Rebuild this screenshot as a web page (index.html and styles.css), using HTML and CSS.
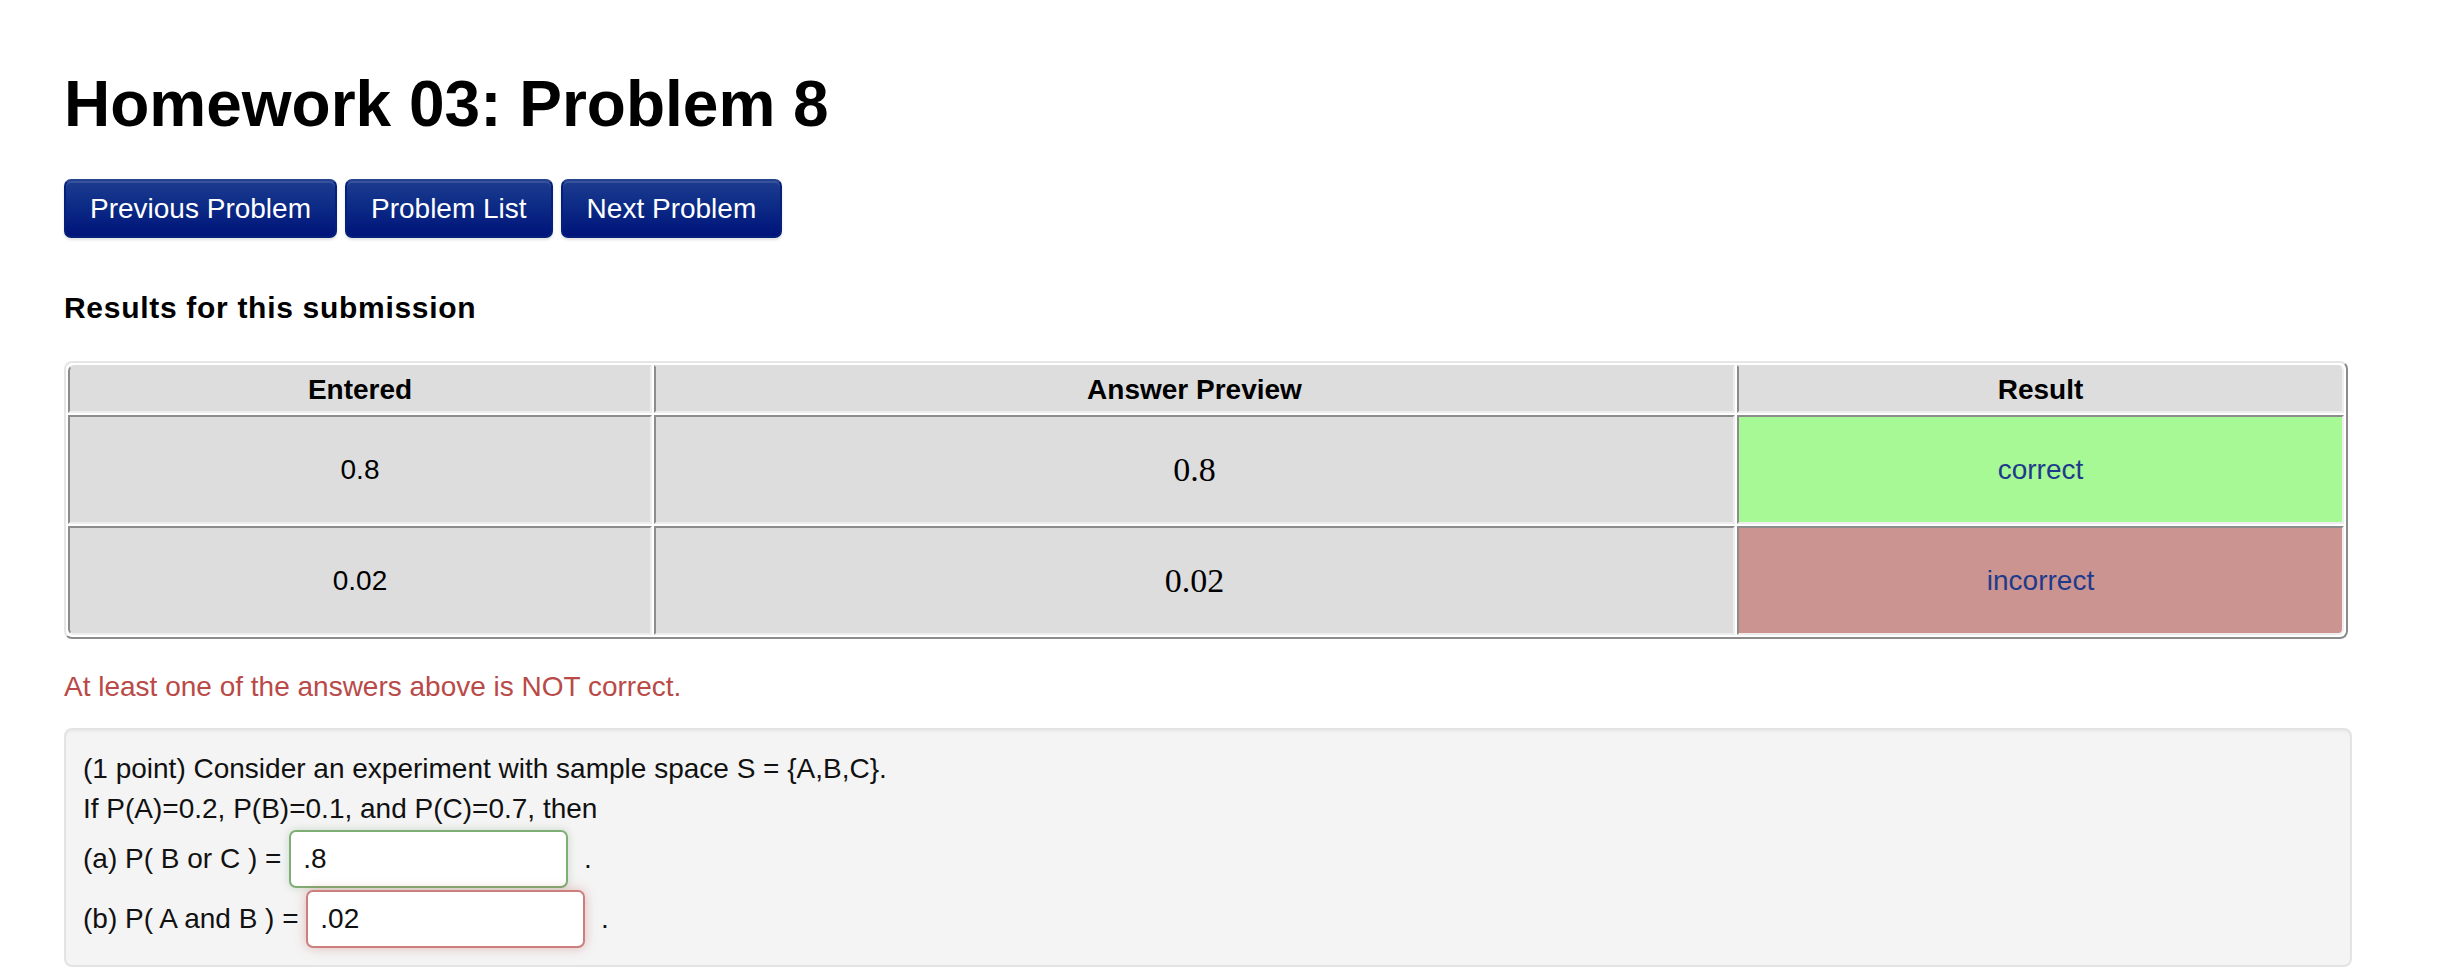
FILE: index.html
```html
<!DOCTYPE html>
<html lang="en">
<head>
<meta charset="utf-8">
<title>Homework 03: Problem 8</title>
<link rel="stylesheet" href="styles.css">
</head>
<body>
<div class="page">
  <h1 class="title">Homework 03: Problem 8</h1>
  <div class="nav">
    <a class="btn" href="#">Previous Problem</a>
    <a class="btn" href="#">Problem List</a>
    <a class="btn" href="#">Next Problem</a>
  </div>
  <h3 class="results-heading">Results for this submission</h3>
  <table class="attempt">
    <thead>
      <tr><th class="c1">Entered</th><th class="c2">Answer Preview</th><th class="c3">Result</th></tr>
    </thead>
    <tbody>
      <tr><td>0.8</td><td class="math">0.8</td><td class="ok">correct</td></tr>
      <tr><td>0.02</td><td class="math">0.02</td><td class="bad">incorrect</td></tr>
    </tbody>
  </table>
  <p class="warning">At least one of the answers above is NOT correct.</p>
  <div class="problem">
    (1 point) Consider an experiment with sample space S = {A,B,C}.<br>
    If P(A)=0.2, P(B)=0.1, and P(C)=0.7, then<br>
    (a) P( B or C ) = <input class="ans ans-correct" type="text" value=".8"> .<br>
    (b) P( A and B ) = <input class="ans ans-wrong" type="text" value=".02"> .
  </div>
</div>
</body>
</html>
```
FILE: styles.css
```css
html, body {
  margin: 0;
  padding: 0;
  background: #ffffff;
}

body {
  font-family: "Liberation Sans", Arial, Helvetica, sans-serif;
  font-size: 28px;
  line-height: 40px;
  color: #111111;
}

.page {
  width: 2288px;
  padding: 68px 0 0 64px;
}

.title {
  margin: 0;
  font-size: 64px;
  line-height: 72px;
  font-weight: bold;
  color: #000000;
}

.nav {
  display: flex;
  gap: 8px;
  margin-top: 39px;
}

.btn {
  display: block;
  padding: 8px 24px 7px;
  font-size: 28px;
  line-height: 40px;
  color: #ffffff;
  text-decoration: none;
  border: 2px solid #05207a;
  border-top-color: #24428f;
  border-radius: 7px;
  background: linear-gradient(to bottom, #1d3b8e 0%, #0c2b86 45%, #00137a 100%);
  box-shadow: inset 0 2px 0 rgba(255, 255, 255, 0.12), 0 2px 3px rgba(0, 0, 0, 0.12);
}

.results-heading {
  margin: 50px 0 0;
  font-size: 30px;
  line-height: 40px;
  letter-spacing: 0.7px;
  font-weight: bold;
  color: #000000;
}

.attempt {
  width: 2284px;
  margin-top: 33px;
  table-layout: fixed;
  border-collapse: separate;
  border-spacing: 2px;
  border: 2px solid;
  border-color: #e6e6e6 #8c8c8c #8c8c8c #e6e6e6;
  border-radius: 8px;
}

.attempt th,
.attempt td {
  box-sizing: border-box;
  text-align: center;
  vertical-align: middle;
  background: #dddddd;
  border: 2px solid;
  border-color: #8c8c8c #eeeeee #eeeeee #8c8c8c;
  color: #000000;
}

.attempt th {
  padding: 3px 8px 2px;
  line-height: 39px;
  font-weight: bold;
  font-size: 28px;
  border-top-color: #dddddd;
}

.attempt th.c1 {
  width: 584px;
  border-top-left-radius: 6px;
}

.attempt th.c2 {
  width: 1081px;
}

.attempt th.c3 {
  border-top-right-radius: 6px;
}

.attempt td {
  padding: 32px 8px 32px;
  line-height: 41px;
  font-size: 28px;
}

.attempt td.math {
  font-family: "Liberation Serif", "Times New Roman", serif;
  font-size: 34px;
}

.attempt td.ok {
  background: #a6f994;
  color: #1e3a8a;
}

.attempt td.bad {
  background: #cc9491;
  color: #1e3a8a;
}

.attempt tbody tr:last-child td:first-child {
  border-bottom-left-radius: 6px;
}

.attempt tbody tr:last-child td:last-child {
  border-bottom-right-radius: 6px;
}

.warning {
  margin: 28px 0 0;
  color: #b94a48;
}

.problem {
  margin-top: 21px;
  padding: 19px 17px 16px;
  background: #f4f4f4;
  border: 2px solid #e3e3e3;
  border-radius: 8px;
  box-shadow: inset 0 2px 2px rgba(0, 0, 0, 0.04);
  color: #111111;
}

.ans {
  box-sizing: border-box;
  width: 279px;
  height: 58px;
  margin: 1px 8px 1px 0;
  padding: 7px 12px;
  font-family: "Liberation Sans", Arial, Helvetica, sans-serif;
  font-size: 28px;
  line-height: 40px;
  color: #111111;
  background: #ffffff;
  border: 2px solid #cccccc;
  border-radius: 7px;
  vertical-align: baseline;
  outline: none;
}

.ans-correct {
  border-color: #7fae74;
  box-shadow: 0 0 8px rgba(70, 136, 71, 0.25);
}

.ans-wrong {
  border-color: #cc7f7d;
  box-shadow: 0 0 12px rgba(185, 74, 72, 0.35);
}
```
